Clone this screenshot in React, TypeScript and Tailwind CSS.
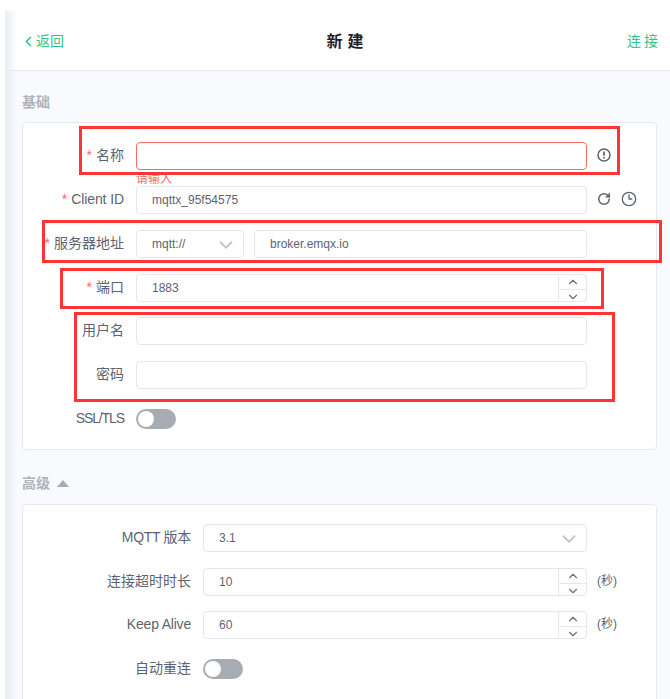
import { Clock3, RotateCw, ChevronDown, ChevronLeft, ChevronUp } from 'lucide-react'
import type { ReactNode } from 'react'

const font = { fontFamily: '"Liberation Sans", "Noto Sans CJK SC", sans-serif' }

function Label({ text, required, width, className = '' }: { text: string; required?: boolean; width: string; className?: string }) {
  return (
    <label className={`${width} ${className} shrink-0 pr-3 text-right text-[14px] leading-[26px] whitespace-nowrap text-[#5f6370]`}>
      {required ? <span className="mr-1 text-[#f56c6c]">*</span> : null}
      {text}
    </label>
  )
}

function Field({ value, className = 'w-[451px]' }: { value?: string; className?: string }) {
  return (
    <div className={`${className} h-[28px] rounded-[4px] border border-[#e4e6f0] bg-white pl-[15px] text-[12px] leading-[26px] text-[#5f6370]`}>
      {value}
    </div>
  )
}

function NumberField({ value, className = 'w-[451px]' }: { value: string; className?: string }) {
  return (
    <div className={`${className} flex h-[28px] rounded-[4px] border border-[#e4e6f0] bg-white text-[12px] leading-[26px] text-[#5f6370]`}>
      <span className="flex-1 pl-[15px]">{value}</span>
      <div className="flex w-[28px] flex-col border-l border-[#e4e6f0] text-[#6b6f7c]">
        <span className="flex flex-1 items-center justify-center border-b border-[#e4e6f0]">
          <ChevronUp size={14} />
        </span>
        <span className="flex flex-1 items-center justify-center">
          <ChevronDown size={14} />
        </span>
      </div>
    </div>
  )
}

function Switch() {
  return (
    <div className="mt-[4px] flex h-[20px] w-[40px] items-center rounded-full bg-[#a7abb2] pl-[2px]">
      <span className="h-[16px] w-[16px] rounded-full bg-white" />
    </div>
  )
}

function Row({ children, className = '' }: { children: ReactNode; className?: string }) {
  return <div className={`relative flex h-[28px] items-start ${className}`}>{children}</div>
}

function RedBox({ className }: { className: string }) {
  return <div className={`pointer-events-none absolute border-[3px] border-[#ff3535] ${className}`} />
}

function AlertIcon() {
  return (
    <svg width="16" height="16" viewBox="0 0 16 16" fill="none" className="mt-[5px] ml-[9px] text-[#5f6370]">
      <circle cx="8" cy="8" r="6" stroke="currentColor" strokeWidth="1.5" />
      <path d="M8 4.6V8.8" stroke="currentColor" strokeWidth="1.7" />
      <path d="M8 10V11.6" stroke="currentColor" strokeWidth="1.7" />
    </svg>
  )
}

export default function App() {
  return (
    <div className="relative h-[699px] w-[670px] overflow-hidden bg-white pl-[5px]" style={font}>
      <div className="pointer-events-none absolute top-[11px] bottom-0 left-[5px] z-10 w-[12px] bg-gradient-to-r from-[#e9ebf3] to-transparent" />

      <header className="flex h-[71px] items-center justify-between border-b border-[#e7e8f1] bg-white pt-[13px] pr-[9px] pl-[17px]">
        <button className="flex w-[60px] items-center text-[14px] text-[#34c388]">
          <ChevronLeft size={17} strokeWidth={2.2} className="-mr-[1px] -ml-[2px]" />
          返回
        </button>
        <h1 className="ml-[12px] text-[16px] font-bold tracking-[5px] text-[#1f1f2e]">新建</h1>
        <button className="w-[60px] text-right text-[14px] tracking-[3px] text-[#34c388]">连接</button>
      </header>

      <main className="h-[628px] bg-[#f9fafd] pt-[21px] pr-[13px] pl-[17px]">
        <h2 className="text-[14px] leading-[20px] font-bold text-[#b0b3bc]">基础</h2>
        <section className="mt-[10px] h-[328px] rounded-[4px] border border-[#e7e8f1] bg-white pt-[19px]">
          <Row>
            <Label text="名称" required width="w-[113px]" />
            <div className="h-[28px] w-[451px] rounded-[4px] border border-[#f56c6c] bg-white" />
            <span className="absolute top-[31px] left-[113px] text-[12px] leading-[13px] text-[#f56c6c]">请输入</span>
            <AlertIcon />
          </Row>
          <Row className="mt-[16px]">
            <Label text="Client ID" required width="w-[113px]" className="tracking-[-0.1px]" />
            <Field value="mqttx_95f54575" />
            <RotateCw size={14} strokeWidth={2.6} className="mt-[6px] ml-[10px] text-[#5f6370]" />
            <Clock3 size={16} strokeWidth={2} className="mt-[5px] ml-[10px] text-[#5f6370]" />
          </Row>
          <Row className="mt-[16px]">
            <Label text="服务器地址" required width="w-[113px]" />
            <div className="flex h-[28px] w-[108px] items-center justify-between rounded-[4px] border border-[#e4e6f0] bg-white pr-[6px] pl-[15px] text-[12px] text-[#5f6370]">
              mqtt://
              <ChevronDown size={22} className="mt-[2px] text-[#c0c4cc]" />
            </div>
            <Field value="broker.emqx.io" className="ml-[10px] w-[333px]" />
          </Row>
          <Row className="mt-[16px]">
            <Label text="端口" required width="w-[113px]" />
            <NumberField value="1883" />
          </Row>
          <Row className="mt-[15px]">
            <Label text="用户名" width="w-[113px]" />
            <Field />
          </Row>
          <Row className="mt-[16px]">
            <Label text="密码" width="w-[113px]" />
            <Field />
          </Row>
          <Row className="mt-[16px]">
            <Label text="SSL/TLS" width="w-[113px]" className="tracking-[-1.1px]" />
            <Switch />
          </Row>
        </section>

        <h2 className="mt-[23px] flex items-center text-[14px] leading-[20px] font-bold text-[#b0b3bc]">
          高级
          <span className="ml-[7px] h-0 w-0 border-r-[6px] border-b-[7px] border-l-[6px] border-r-transparent border-b-[#a7abb2] border-l-transparent" />
        </h2>
        <section className="mt-[11px] h-[300px] rounded-[4px] border border-[#e7e8f1] bg-white pt-[19px]">
          <Row>
            <Label text="MQTT 版本" width="w-[180px]" className="tracking-[-0.3px]" />
            <div className="flex h-[28px] w-[384px] items-center justify-between rounded-[4px] border border-[#e4e6f0] bg-white pr-[6px] pl-[15px] text-[12px] text-[#5f6370]">
              3.1
              <ChevronDown size={22} className="mt-[2px] text-[#c0c4cc]" />
            </div>
          </Row>
          <Row className="mt-[16px]">
            <Label text="连接超时时长" width="w-[180px]" />
            <NumberField value="10" className="w-[384px]" />
            <span className="ml-[10px] text-[12px] leading-[26px] text-[#5f6370]">(秒)</span>
          </Row>
          <Row className="mt-[15px]">
            <Label text="Keep Alive" width="w-[180px]" className="tracking-[-0.2px]" />
            <NumberField value="60" className="w-[384px]" />
            <span className="ml-[10px] text-[12px] leading-[26px] text-[#5f6370]">(秒)</span>
          </Row>
          <Row className="mt-[16px]">
            <Label text="自动重连" width="w-[180px]" />
            <Switch />
          </Row>
        </section>
      </main>

      <RedBox className="top-[126px] left-[79px] h-[49px] w-[541px]" />
      <RedBox className="top-[220px] left-[42px] h-[43px] w-[620px]" />
      <RedBox className="top-[268px] left-[60px] h-[41px] w-[544px]" />
      <RedBox className="top-[312px] left-[74px] h-[90px] w-[541px]" />
    </div>
  )
}
